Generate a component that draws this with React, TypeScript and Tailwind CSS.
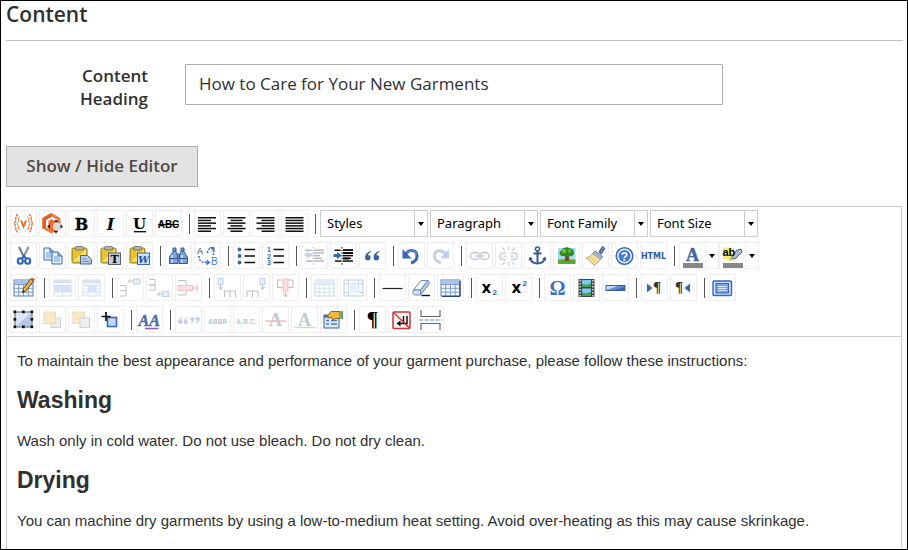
import { useState } from 'react';
import type { ReactNode } from 'react';
import clsx from 'clsx';

const BLUE = '#3566b8';
const NAVY = '#27477f';

const Lines = ({ rows, color = '#111' }: { rows: number[][]; color?: string }) => (
  <g fill={color}>
    {rows.map(([x, y, w]) => (
      <rect key={`${x}-${y}`} x={x} y={y} width={w} height="1.5" />
    ))}
  </g>
);

const Grid = ({ header = false }: { header?: boolean }) => (
  <g>
    <rect x="4" y="6" width="19" height="16" fill="#f4f8ff" stroke="#5d7db0" />
    <rect x="4.5" y="6.5" width="18" height="3.5" fill="#a9c4f2" />
    <path d="M4 10.5h19M4 14.3h19M4 18.2h19M8.7 10v12M13.5 10v12M18.2 10v12" stroke="#7f9bc9" />
    {header && <path d="M5 22.3h18M23 7v15" stroke="#27477f" strokeWidth="1.3" />}
  </g>
);

const Clipboard = () => (
  <g>
    <rect x="4" y="6" width="15" height="15" rx="1.5" fill="#e6c331" stroke="#8a7422" />
    <path d="M5 19.5l13-12v12z" fill="#f6e169" />
    <rect x="7.5" y="4.5" width="8" height="3.5" rx="1" fill="#b4b4a8" stroke="#66665c" strokeWidth=".8" />
  </g>
);

const PageShape = ({ x, y }: { x: number; y: number }) => (
  <g transform={`translate(${x} ${y})`}>
    <path d="M0 0h6l4 4v8H0z" fill="#e7f0fd" stroke="#3668b4" />
    <path d="M6 0v4h4" fill="#9cbdf0" stroke="#3668b4" />
    <path d="M2 5h5M2 7h6M2 9h6" stroke="#7299d8" />
  </g>
);

const Quote = ({ x, flip = false }: { x: number; flip?: boolean }) => (
  <g transform={flip ? `translate(${x + 6} 18) rotate(180)` : `translate(${x} 9)`}>
    <path d="M6 0C2 1 0 3.5 0 6.5C0 8.5 1.2 9.5 2.9 9.5S5.7 8.3 5.7 6.7S4.6 4 3 4C3.2 2.5 4.5 1.5 6.2.9z" fill="#3a659f" />
  </g>
);

const icons: Record<string, ReactNode> = {
  variable: (
    <g fill="none" stroke="#ec6b25" strokeWidth="1.3">
      <path d="M8 4.5C4.5 4.5 7 12 4 13.5C7 15 4.5 22 8 22" strokeDasharray="3 .6" />
      <path d="M19 4.5c3.5 0 1 7.5 4 9c-3 1.5-.5 8.5-4 8.5" strokeDasharray="3 .6" />
      <path d="M10 6.5c-2.5.5-.8 5.500-3 7c2.200 1.500.5 6 3 6.500M17 6.500c2.500.5.8 5.500 3 7c-2.200 1.500-.5 6-3 6.500" strokeWidth=".9" />
      <path d="M11 10.5l2.5 6l2.5-6" strokeWidth="1.9" />
    </g>
  ),
  widget: (
    <g>
      <path d="M12.5 3L21.5 8v10.5l-9 5L3.5 18.5V8z" fill="#f47b3f" />
      <path d="M12.5 6.5l5.5 3v8l-5.5 3l-5.5-3v-8z" fill="#fff" />
      <path d="M12.5 3v4l-5.5 3v8l-3.5.5V8z" fill="#e35a23" />
      <path d="M9.5 11l3-2l3 2v8.5l-3 1.7l-3-1.7z" fill="#f26a2c" />
      <path d="M14 13.5h2l1-1.5h2l1 1.5h2v6h-2l-1 1h-3l-2-2z" fill="#ddd7d2" />
      <path d="M17 9.5l2.3 2.8h-4.6zM17 23.5l2.3-2.8h-4.6zM8 16.5l3-2.3v4.6zM24 16.5l-2.500-2.300v4.600z" fill="#26211e" />
    </g>
  ),
  bold: <text x="13.5" y="20" textAnchor="middle" fontSize="16" fontWeight="900" fontFamily="DejaVu Serif, serif" stroke="#000" strokeWidth=".3">B</text>,
  italic: <text x="13.5" y="20" textAnchor="middle" fontSize="16" fontWeight="700" fontStyle="italic" fontFamily="DejaVu Serif, serif">I</text>,
  underline: (
    <g>
      <text x="13.5" y="18.5" textAnchor="middle" fontSize="15" fontWeight="700" fontFamily="DejaVu Serif, serif">U</text>
      <path d="M8 21.7h12" stroke="#000" strokeWidth="1.3" />
    </g>
  ),
  strike: (
    <g>
      <text x="13.5" y="18" textAnchor="middle" fontSize="10" fontWeight="700" fontFamily="Liberation Sans, sans-serif">ABC</text>
      <path d="M3 14.5h21" stroke="#000" strokeWidth="1.2" />
    </g>
  ),
  left: <Lines rows={[[4, 7, 18], [4, 9.7, 13], [4, 12.4, 18], [4, 15.1, 13], [4, 17.8, 18], [4, 20.5, 13]]} />,
  center: <Lines rows={[[4.5, 7, 18], [7.5, 9.7, 12], [4.5, 12.4, 18], [7.5, 15.1, 12], [4.5, 17.8, 18], [7.5, 20.5, 12]]} />,
  right: <Lines rows={[[4.5, 7, 18], [9.5, 9.7, 13], [4.5, 12.4, 18], [9.5, 15.1, 13], [4.5, 17.8, 18], [9.5, 20.5, 13]]} />,
  justify: <Lines rows={[[4.5, 7, 18], [4.5, 9.7, 18], [4.5, 12.4, 18], [4.5, 15.1, 18], [4.5, 17.8, 18], [4.5, 20.5, 18]]} />,
  cut: (
    <g fill="none">
      <path d="M9 5l5.5 11M18.5 5L13 16" stroke="#8295ad" strokeWidth="2.2" />
      <path d="M9 5l5.5 11" stroke="#4d6484" strokeWidth=".8" />
      <ellipse cx="10.3" cy="19" rx="2.6" ry="2.8" stroke="#2461b5" strokeWidth="2" />
      <ellipse cx="17.7" cy="19" rx="2.6" ry="2.8" stroke="#2461b5" strokeWidth="2" />
      <path d="M12 16.5l2-2.5l2 2.5" stroke="#2461b5" strokeWidth="1.8" />
    </g>
  ),
  copy: (
    <g>
      <PageShape x={5} y={6} />
      <PageShape x={13} y={10} />
    </g>
  ),
  paste: (
    <g>
      <Clipboard />
      <path d="M12.5 13.5h7l4 4v4.5h-11z" fill="#b9cbe3" stroke="#47617f" />
      <path d="M14.5 17h4M14.5 19.5h7" stroke="#6e8bb2" />
    </g>
  ),
  pasteText: (
    <g>
      <Clipboard />
      <rect x="11.5" y="11" width="12" height="11.5" fill="#c3cad6" stroke="#59616e" />
      <text x="17.5" y="21" textAnchor="middle" fontSize="11" fontWeight="700" fontFamily="DejaVu Serif, serif">T</text>
    </g>
  ),
  pasteWord: (
    <g>
      <Clipboard />
      <rect x="11.5" y="11" width="12" height="11.5" fill="#cbe0fb" stroke="#3f6aac" />
      <text x="17.5" y="21" textAnchor="middle" fontSize="10" fontWeight="700" fontStyle="italic" fill="#1d54b2" fontFamily="DejaVu Serif, serif">W</text>
    </g>
  ),
  find: (
    <g fill="#7da3d9" stroke="#2d5899">
      <path d="M8 6h3v4l2 4v7.5H4.5V15L8 10zM16 6h3v4l3.5 5v6.5H14V14l2-4z" />
      <path d="M12.5 12h2v4h-2zM4.5 16.5h8.5M14 16.5h8.5M8 9h3M16 9h3" />
      <path d="M7 13v3M7 18v2.5M17 13v3M17 18v2.5" stroke="#e3edfb" strokeWidth="1.4" />
    </g>
  ),
  replace: (
    <g>
      <text x="3" y="12" fontSize="9" fontFamily="Liberation Sans, sans-serif" fill="#333">A</text>
      <text x="17" y="23" fontSize="10" fontFamily="Liberation Sans, sans-serif" fill="#4b7ed6">B</text>
      <g fill="none" stroke="#3e73d0" strokeWidth="1.6" strokeDasharray="2 1.3">
        <path d="M5 14c0 5 2 6.5 8 6.5M13.5 11c0-3 2-5 5-5M19.5 8v5" />
      </g>
      <path d="M12.5 17.5l4 3l-4 3zM15.5 5h5v5z" fill="#3e73d0" />
    </g>
  ),
  bullets: (
    <g>
      <g fill={BLUE}>
        <circle cx="6.5" cy="7.5" r="1.9" />
        <circle cx="6.5" cy="14" r="1.9" />
        <circle cx="6.5" cy="20.5" r="1.9" />
      </g>
      <path d="M11.5 7.5h10.5M11.5 14h10.5M11.5 20.5h10.5" stroke="#111" strokeWidth="1.4" />
    </g>
  ),
  numbers: (
    <g>
      <g fontSize="7" fontWeight="700" fill={BLUE} fontFamily="Liberation Sans, sans-serif">
        <text x="5" y="10">1</text>
        <text x="5" y="16.5">2</text>
        <text x="5" y="23">3</text>
      </g>
      <path d="M11.5 7.5h10.5M11.5 14h10.5M11.5 20.5h10.5" stroke="#111" strokeWidth="1.4" />
    </g>
  ),
  outdent: (
    <g>
      <Lines rows={[[4.5, 7.5, 6], [13, 7.5, 10], [13, 10.2, 10], [13, 12.9, 6], [13, 15.6, 8], [5, 18.3, 6], [13, 18.3, 10]]} />
      <path d="M12 5v18" stroke="#111" strokeDasharray="1.5 1.2" />
      <path d="M3 13l5-3.5v2h3.5v3H8v2z" fill={BLUE} />
    </g>
  ),
  indent: (
    <g>
      <Lines rows={[[4.5, 7.5, 6], [13, 7.5, 10], [13, 10.2, 10], [13, 12.9, 10], [13, 15.6, 8], [5, 18.3, 6], [13, 18.3, 10]]} />
      <path d="M13 8.2h10M13 11h10M13 16.5h6" stroke="#111" strokeWidth="1.8" />
      <path d="M12 5v18" stroke="#111" strokeDasharray="1.5 1.2" />
      <path d="M12 13.5L7 10v2H3.5v3H7v2z" fill={BLUE} />
    </g>
  ),
  blockquote: (
    <g>
      <Quote x={6} />
      <Quote x={14.5} />
    </g>
  ),
  undo: (
    <g>
      <path d="M8 11.5c4-4.5 11-4 11 2.5c0 3.5-2.5 6-6 7" fill="none" stroke={BLUE} strokeWidth="3" />
      <path d="M4.5 7v9.5h9z" fill={BLUE} />
      <path d="M9 11c4-4 9-2.5 9.5 1.5" fill="none" stroke="#7aa4e6" />
    </g>
  ),
  redo: (
    <g>
      <path d="M18.5 12c-4-5-11-4-11 2c0 3.5 3 6 6.5 6.5" fill="none" stroke={BLUE} strokeWidth="2.8" />
      <path d="M22 7v9.5h-9z" fill={BLUE} />
    </g>
  ),
  link: (
    <g fill="none" stroke="#5d6f92" strokeWidth="1.8">
      <rect x="4.5" y="10.5" width="9" height="7" rx="3.5" />
      <rect x="14" y="10.5" width="9" height="7" rx="3.5" />
      <path d="M9 14h9.5" />
    </g>
  ),
  unlink: (
    <g fill="none" stroke="#5d6f92" strokeWidth="1.7">
      <path d="M11 11H8a3.3 3.3 0 000 6.6h3M16 11h3a3.3 3.3 0 010 6.6h-3M8.5 14.3h3M15.5 14.3h3" />
      <path d="M13.5 4v4M13.5 20v4M7 5.5l3 3M20 5.5l-3 3M7 23l3-3M20 23l-3-3" strokeWidth="1.3" />
    </g>
  ),
  anchor: (
    <g fill="none" stroke="#385b8d" strokeWidth="2">
      <circle cx="13.5" cy="7" r="2" strokeWidth="1.5" />
      <path d="M13.5 9v12.5M9.5 11.5h8M6 16c1 4 3.5 5.5 7.5 5.5S20 20 21 16" />
      <path d="M4.5 18.5l1.2-4l3.3 2.5zM22.5 18.5l-1.2-4l-3.3 2.5z" fill="#385b8d" stroke="none" />
    </g>
  ),
  image: (
    <g>
      <rect x="5" y="6" width="17.5" height="15" fill="#a7d8f5" />
      <path d="M5 17.5h17.5V22H5z" fill="#59aa2e" />
      <path d="M12.5 13h3l1 6h-5z" fill="#774b20" />
      <path d="M7 12.5c-1.5-3 1-4 2-4.5c1-3 6-3.5 8-1.5c3 0 5 3.5 3.5 6c-1.5 2.5-5 2-6.5 1.5s-6 1.5-7-1.5z" fill="#318c1f" />
      <circle cx="11" cy="9" r="2" fill="#79c63d" />
      <circle cx="16.5" cy="9" r="1.7" fill="#69b934" />
    </g>
  ),
  cleanup: (
    <g>
      <path d="M17 10l3.5-5.5l2.5 2l-4 5.5z" fill="#6584b4" stroke="#3a5785" />
      <path d="M13 9l7.5 5.5l-2 3l-8-5.5z" fill="#a2b8d8" stroke="#5f7ca5" />
      <path d="M10.5 11.5l8 6l-6 6L4 15.5c3 0 5-1.5 6.5-4z" fill="#f3dfa0" stroke="#c4a65b" />
      <path d="M8.5 15.5l6 5" stroke="#dcc274" />
    </g>
  ),
  help: (
    <g>
      <circle cx="13.5" cy="14" r="8.3" fill="#eaf2fe" stroke={BLUE} strokeWidth="1.5" />
      <circle cx="13.5" cy="14" r="6" fill="#4577cf" />
      <text x="13.5" y="18.5" textAnchor="middle" fontSize="12" fontWeight="700" fill="#fff" fontFamily="Liberation Sans, sans-serif">?</text>
    </g>
  ),
  html: <text x="13.5" y="17" textAnchor="middle" fontSize="8" fontWeight="700" fill="#305c9d" fontFamily="DejaVu Sans, sans-serif">HTML</text>,
  foreColor: (
    <g>
      <text x="13.5" y="19" textAnchor="middle" fontSize="18" fontWeight="700" fill="#41659e" stroke="#41659e" strokeWidth=".4" fontFamily="Liberation Serif, serif">A</text>
      <rect x="4" y="21" width="20" height="5" fill="#888" />
    </g>
  ),
  backColor: (
    <g>
      <rect x="4" y="5.5" width="11" height="12" fill="#f4ec70" />
      <path d="M12 16l6-8l4-1l1 3l-7 7z" fill="#a9bdd9" stroke="#4a668f" />
      <path d="M9.5 18l2.5-3l3 2.5l-3 1.5z" fill="#d3bc42" />
      <text x="3.5" y="14" fontSize="11" fontWeight="700" fontFamily="Liberation Sans, sans-serif">ab</text>
      <rect x="4" y="21" width="20" height="5" fill="#888" />
    </g>
  ),
  table: (
    <g>
      <Grid />
      <path d="M12.5 18.5l1-4L20.5 5l3 2l-7.5 10z" fill="#e8b74d" stroke="#5d4626" />
      <path d="M20.5 5l1.5-1.5l3 2l-1.5 1.5z" fill="#bb5e4e" />
      <path d="M12.5 18.5l.5-2l1.5 1z" fill="#111" />
    </g>
  ),
  rowProps: (
    <g>
      <rect x="5" y="6" width="17" height="16" fill="#eaf1fd" stroke="#7d9bcd" />
      <path d="M5 7.5h17" stroke="#7f9fd6" strokeWidth="3" />
      <rect x="5" y="12" width="17" height="5" fill="#79a2ec" />
      <path d="M5 11.5h17M5 17.5h17M13.5 17.5V22" stroke="#5f88cf" />
    </g>
  ),
  cellProps: (
    <g>
      <rect x="5" y="6" width="17" height="16" fill="#eaf1fd" stroke="#7d9bcd" />
      <path d="M5 7.5h17" stroke="#7f9fd6" strokeWidth="3" />
      <rect x="10" y="11.5" width="8" height="6.5" fill="#79a2ec" />
      <path d="M5 11.5h17M5 18h17M10 10v12M18 10v12" stroke="#7f9fd6" />
    </g>
  ),
  rowBefore: (
    <g fill="none" stroke="#333">
      <path d="M3 11.5h6v5H3M3 16.5h6v5.5H3M11.5 7h5M13.5 5l-2 2l2 2" />
      <rect x="16.5" y="5" width="6.5" height="5" fill="#a9c4f2" stroke={BLUE} />
    </g>
  ),
  rowAfter: (
    <g fill="none" stroke="#333">
      <path d="M3 5.5h6v5.5H3M3 11h6v5H3M11.5 20h5M13.5 18l-2 2l2 2" />
      <rect x="16.5" y="17.5" width="6.5" height="5" fill="#a9c4f2" stroke={BLUE} />
    </g>
  ),
  deleteRow: (
    <g fill="none" stroke="#333">
      <path d="M3 6.5h8v5M3 21h8v-4M18 14h5M20.5 11.5l2.5 2.5l-2.5 2.5" />
      <rect x="3" y="11.5" width="14.5" height="5" fill="#f29c9c" stroke="#cc3232" />
    </g>
  ),
  colBefore: (
    <g fill="none" stroke="#333">
      <path d="M10.5 23v-6h5.5v6M16 17h5.5v6M6.5 10v5M4.5 13l2 2.5l2-2.5" />
      <rect x="4" y="4.5" width="5" height="6" fill="#a9c4f2" stroke={BLUE} />
    </g>
  ),
  colAfter: (
    <g fill="none" stroke="#333">
      <path d="M4 23v-6h5.5v6M9.5 17H15v6M19.5 10v5M17.5 13l2 2.5l2-2.5" />
      <rect x="17" y="4.5" width="5" height="6" fill="#a9c4f2" stroke={BLUE} />
    </g>
  ),
  deleteCol: (
    <g fill="none" stroke="#333">
      <path d="M5.5 6v7.5h5M5.5 6h5M21 6v7.5h-5M21 6h-5M13.5 18v5M11.5 20.5l2 2.5l2-2.5" />
      <rect x="11" y="5" width="5" height="12" fill="#f29c9c" stroke="#cc3232" />
    </g>
  ),
  splitCells: <Grid />,
  mergeCells: (
    <g>
      <rect x="4" y="6" width="19" height="16" fill="#eaf1fd" stroke={BLUE} />
      <path d="M4 10h19M4 18.5h4.5M18.5 6v4M8.5 6v16M18.5 18.5h4.5" stroke={BLUE} />
      <rect x="8.5" y="10" width="11" height="8.5" fill="#b3cbf5" />
    </g>
  ),
  hr: <path d="M3.5 14.5h20" stroke="#222" strokeWidth="1.2" />,
  eraser: (
    <g stroke="#6e87ad">
      <path d="M5.5 16L13 6.5h7L12.5 16z" fill="#f3f7fd" />
      <path d="M5.5 16h7v5H7.5c-2.5 0-3.5-3-2-5z" fill="#d5e0f1" />
      <path d="M12.5 16L20 6.5c1.5 1 1.5 3 .5 4.5l-8 10z" fill="#b9cae5" />
      <path d="M13.5 21.5H22" stroke="#111" strokeWidth="1.4" />
    </g>
  ),
  visualAid: <Grid header />,
  sub: (
    <g fontWeight="700">
      <text x="5.5" y="18.5" fontSize="15" fontFamily="DejaVu Sans, sans-serif">x</text>
      <text x="16.5" y="21" fontSize="8" fill={BLUE} fontFamily="Liberation Sans, sans-serif">2</text>
    </g>
  ),
  sup: (
    <g fontWeight="700">
      <text x="6.5" y="19" fontSize="15" fontFamily="DejaVu Sans, sans-serif">x</text>
      <text x="17.5" y="12" fontSize="8" fill={BLUE} fontFamily="Liberation Sans, sans-serif">2</text>
    </g>
  ),
  charmap: <text x="13.5" y="21" textAnchor="middle" fontSize="20" fontWeight="700" fill="#3f70ca" fontFamily="Liberation Serif, serif">Ω</text>,
  media: (
    <g>
      <rect x="5.5" y="5" width="16" height="18" fill="#434343" />
      <path d="M7.2 6v17M19.8 6v17" stroke="#d8d8d8" strokeWidth="1.5" strokeDasharray="1.5 1.5" />
      <rect x="9" y="6" width="9" height="7" fill="#7bc9ef" />
      <rect x="9" y="14.5" width="9" height="7" fill="#7bc9ef" />
      <path d="M9 10l4 1l5-2v4H9zM9 18.5l4 1l5-2v4H9z" fill="#44a05a" />
    </g>
  ),
  advHr: (
    <g>
      <rect x="4" y="11.5" width="19" height="5" fill="#5c8ee0" stroke="#3c5f9c" />
      <path d="M4.5 16V12H16z" fill="#c4daf9" />
      <path d="M12 16l10.5-3V16z" fill={BLUE} />
    </g>
  ),
  ltr: (
    <g>
      <path d="M6 9.5v9l5.500-4.500z" fill={BLUE} />
      <text x="12" y="18" fontSize="15" fontWeight="700" fontFamily="Liberation Serif, serif" fill="#333">¶</text>
    </g>
  ),
  rtl: (
    <g>
      <text x="5" y="18" fontSize="15" fontWeight="700" fontFamily="Liberation Serif, serif" fill="#333">¶</text>
      <path d="M20 9.5v9l-5.500-4.500z" fill={BLUE} />
    </g>
  ),
  fullscreen: (
    <g>
      <rect x="4" y="7" width="18.5" height="14.5" rx="1" fill="#ccdef9" stroke={BLUE} strokeWidth="1.4" />
      <rect x="7" y="9.5" width="12.5" height="9.5" fill="#75a2ed" stroke={BLUE} />
      <path d="M9 12.5h8.5M9 14.5h8.5M9 16.5h8.5" stroke="#dce9fd" />
    </g>
  ),
  layer: (
    <g>
      <rect x="5" y="6" width="17" height="15" fill="#dce6f7" stroke="#51617e" />
      <path d="M6 20L21 7v13z" fill="#b5c8e9" />
      <g fill="#111">
        {[3.5, 12, 20.5].map((x) => [4.5, 12, 19.5].map((y) => (x === 12 && y === 12 ? null : <rect key={`${x}-${y}`} x={x} y={y} width="2.7" height="2.7" />)))}
      </g>
    </g>
  ),
  forward: (
    <g>
      <rect x="12" y="12" width="9.5" height="9.5" fill="#c9c9c9" stroke="#666" />
      <rect x="5" y="6" width="11.5" height="11.5" fill="#f3b83b" stroke="#b08d3d" />
    </g>
  ),
  backward: (
    <g>
      <rect x="5" y="6" width="11.5" height="11.5" fill="#f3b83b" stroke="#b08d3d" />
      <rect x="12" y="12" width="9.5" height="9.5" fill="#c9c9c9" stroke="#666" />
    </g>
  ),
  absolute: (
    <g>
      <rect x="10.5" y="11.5" width="9" height="9" fill="#c3d8fa" stroke={BLUE} strokeWidth="1.6" />
      <path d="M9 6v9M4.5 10.5h9" stroke="#111" strokeWidth="1.7" />
    </g>
  ),
  styleProps: (
    <g>
      <text x="2.5" y="20" fontSize="16" fontFamily="Liberation Serif, serif" fontStyle="italic" fontWeight="700" fill="#456cab" stroke="#456cab" strokeWidth=".4">AA</text>
      <path d="M9 22.5h13.5" stroke="#8b5ac2" strokeWidth="1.5" />
    </g>
  ),
  cite: (
    <g transform="translate(2.5 5) scale(.76 .7)">
      <Quote x={1} />
      <Quote x={8} />
      <Quote x={16.5} flip />
      <Quote x={23.5} flip />
    </g>
  ),
  abbr: <text x="13.5" y="17.5" textAnchor="middle" fontSize="8" fontWeight="700" fill={NAVY} fontFamily="Liberation Mono, monospace">ABBR</text>,
  acronym: <text x="13.5" y="17.5" textAnchor="middle" fontSize="7" fontWeight="700" fill={NAVY} fontFamily="Liberation Sans, sans-serif">A.B.C.</text>,
  del: (
    <g>
      <text x="13.5" y="20" textAnchor="middle" fontSize="18" fontWeight="700" fill={NAVY} fontFamily="Liberation Serif, serif">A</text>
      <path d="M3.5 15h20.5" stroke="#e02020" strokeWidth="1.4" />
    </g>
  ),
  ins: (
    <g>
      <text x="13.5" y="20" textAnchor="middle" fontSize="18" fontWeight="700" fill={NAVY} fontFamily="Liberation Serif, serif">A</text>
      <path d="M3.5 21.5h20.5" stroke="#1ea01e" strokeWidth="1.4" />
    </g>
  ),
  attribs: (
    <g>
      <rect x="4" y="9" width="15" height="13" fill="#dce9fb" stroke="#3a5f96" />
      <path d="M4 10.5h15" stroke="#3a5f96" strokeWidth="2" />
      <path d="M6 14.5h3M6 18h3M11 14.5h6M11 18h6" stroke="#4d7dc6" strokeWidth="1.3" />
      <path d="M8 9.5l3-4h9v7h-5l-2 1.5l-1-2.5l-4 .5z" fill="#efb83f" stroke="#89651b" />
      <rect x="20.5" y="5" width="2.5" height="8" fill="#5ea568" />
    </g>
  ),
  visualChars: <text x="13.5" y="20" textAnchor="middle" fontSize="21" fontWeight="700" fontFamily="Liberation Serif, serif">¶</text>,
  nonBreaking: (
    <g>
      <rect x="5" y="6" width="17" height="16.5" rx="1" fill="#fdf3f3" stroke="#c93434" strokeWidth="1.5" />
      <path d="M15.5 10v8M19 10v7.5h-7" fill="none" stroke="#111" strokeWidth="1.5" />
      <path d="M12.5 14.5v6l-4-3z" fill="#111" />
      <path d="M5.5 6.5l16 15.5" stroke="#d22c2c" strokeWidth="1.3" />
    </g>
  ),
  pageBreak: (
    <g fill="none" stroke="#666" strokeWidth="1.2">
      <path d="M4 4v6.5h19V4M4 24v-6.5h19V24" />
      <path d="M2 14h23" stroke="#8db3dc" strokeDasharray="4 1.5" strokeWidth="1.5" />
    </g>
  ),
};

type Tool = string | { name: string; kind: 'disabled' | 'select' | 'split' };

const off = (name: string): Tool => ({ name, kind: 'disabled' });
const select = (name: string): Tool => ({ name, kind: 'select' });
const split = (name: string): Tool => ({ name, kind: 'split' });

// '|' draws a separator between two groups
const toolbarRows: Tool[][] = [
  ['variable', 'widget', 'bold', 'italic', 'underline', 'strike', '|', 'left', 'center', 'right', 'justify', '|',
    select('Styles'), select('Paragraph'), select('Font Family'), select('Font Size')],
  ['cut', 'copy', 'paste', 'pasteText', 'pasteWord', '|', 'find', 'replace', '|', 'bullets', 'numbers', '|',
    off('outdent'), 'indent', 'blockquote', '|', 'undo', off('redo'), '|', off('link'), off('unlink'), 'anchor',
    'image', 'cleanup', 'help', 'html', '|', split('foreColor'), split('backColor')],
  ['table', '|', off('rowProps'), off('cellProps'), '|', off('rowBefore'), off('rowAfter'), off('deleteRow'), '|',
    off('colBefore'), off('colAfter'), off('deleteCol'), '|', off('splitCells'), off('mergeCells'), '|', 'hr',
    'eraser', 'visualAid', '|', 'sub', 'sup', '|', 'charmap', 'media', 'advHr', '|', 'ltr', 'rtl', '|', 'fullscreen'],
  ['layer', off('forward'), off('backward'), 'absolute', '|', 'styleProps', '|', off('cite'), off('abbr'),
    off('acronym'), off('del'), off('ins'), 'attribs', '|', 'visualChars', 'nonBreaking', 'pageBreak'],
];

const Caret = () => (
  <svg viewBox="0 0 6 4" className="h-1 w-1.5" aria-hidden="true">
    <path d="M0 0h6L3 4z" fill="#000" />
  </svg>
);

const ToolButton = ({ name, disabled = false }: { name: string; disabled?: boolean }) => (
  <button type="button" aria-label={name} disabled={disabled} className="h-[27px] w-[27px] shrink-0 border border-[#eeeeee] bg-white">
    <svg viewBox="1 1 25 25" className={clsx('block h-[25px] w-[25px]', disabled && 'opacity-30')} aria-hidden="true">
      {icons[name]}
    </svg>
  </button>
);

const SplitButton = ({ name }: { name: string }) => (
  <div className="-mr-0.5 flex last:mr-0">
    <ToolButton name={name} />
    <button type="button" aria-label={`${name} options`} className="flex h-[27px] w-[13px] items-center justify-center border-y border-r border-[#eeeeee]">
      <Caret />
    </button>
  </div>
);

const ToolSelect = ({ name }: { name: string }) => (
  <div className="flex h-[27px] w-[108px] shrink-0 border border-[#cccccc] bg-white">
    <select aria-label={name} className="min-w-0 flex-1 appearance-none bg-transparent pl-1.5 font-['Noto_Sans','Open_Sans',sans-serif] text-[13px] text-black">
      <option>{name}</option>
    </select>
    <span className="pointer-events-none flex w-[13px] items-center justify-center border-l border-[#cccccc]">
      <Caret />
    </span>
  </div>
);

const ToolItem = ({ tool }: { tool: Tool }) => {
  if (tool === '|') return <span className="flex h-[27px] w-2 shrink-0 items-center pl-[5px]"><span className="h-5 w-px bg-[#555555]" /></span>;
  if (typeof tool === 'string') return <ToolButton name={tool} />;
  if (tool.kind === 'select') return <ToolSelect name={tool.name} />;
  if (tool.kind === 'split') return <SplitButton name={tool.name} />;
  return <ToolButton name={tool.name} disabled />;
};

export default function App() {
  const [heading, setHeading] = useState('How to Care for Your New Garments');
  const [showToolbar, setShowToolbar] = useState(true);

  return (
    <main className="flex min-h-screen flex-col border border-black bg-white pl-[5px] pr-1 font-['Open_Sans','Noto_Sans',sans-serif] text-[#303030]">
      <h1 className="border-b border-[#c5c2bd] pb-3 text-[21px] font-semibold leading-[27px]">Content</h1>

      <div className="mt-[23px] flex items-start">
        <label htmlFor="content-heading" className="w-[142px] shrink-0 pl-14 text-right text-[17px] font-semibold leading-[23px]">
          Content Heading
        </label>
        <input
          id="content-heading"
          type="text"
          value={heading}
          onChange={(e) => setHeading(e.target.value)}
          className="ml-[37px] h-[41px] w-3/5 rounded-[1px] border border-[#adadad] px-[13px] pb-0.5 text-[17px]"
        />
      </div>

      <button
        type="button"
        onClick={() => setShowToolbar(!showToolbar)}
        className="mt-9 h-[41px] w-48 self-start border border-[#adadad] bg-[#e3e3e3] pb-0.5 text-[17px] font-semibold text-[#514943]"
      >
        Show / Hide Editor
      </button>

      <section className="mr-px mt-[19px] flex flex-1 flex-col border-x border-t border-[#cccccc]">
        {showToolbar && (
          <div className="flex flex-col gap-[5px] border-b border-[#cccccc] px-[3px] pb-[3px] pt-[3px]">
            {toolbarRows.map((row, r) => (
              <div key={r} className="flex flex-wrap gap-0.5">
                {row.map((tool, i) => <ToolItem key={i} tool={tool} />)}
              </div>
            ))}
          </div>
        )}
        <article className="px-[10px] pt-[14px] font-['Liberation_Sans',Arial,sans-serif] text-[15px] leading-5">
          <p>To maintain the best appearance and performance of your garment purchase, please follow these instructions:</p>
          <h2 className="mt-4 text-[23px] font-bold leading-[26px]">Washing</h2>
          <p className="mt-[18px]">Wash only in cold water. Do not use bleach. Do not dry clean.</p>
          <h2 className="mt-4 text-[23px] font-bold leading-[26px]">Drying</h2>
          <p className="mt-[18px]">You can machine dry garments by using a low-to-medium heat setting. Avoid over-heating as this may cause skrinkage.</p>
        </article>
      </section>
    </main>
  );
}
